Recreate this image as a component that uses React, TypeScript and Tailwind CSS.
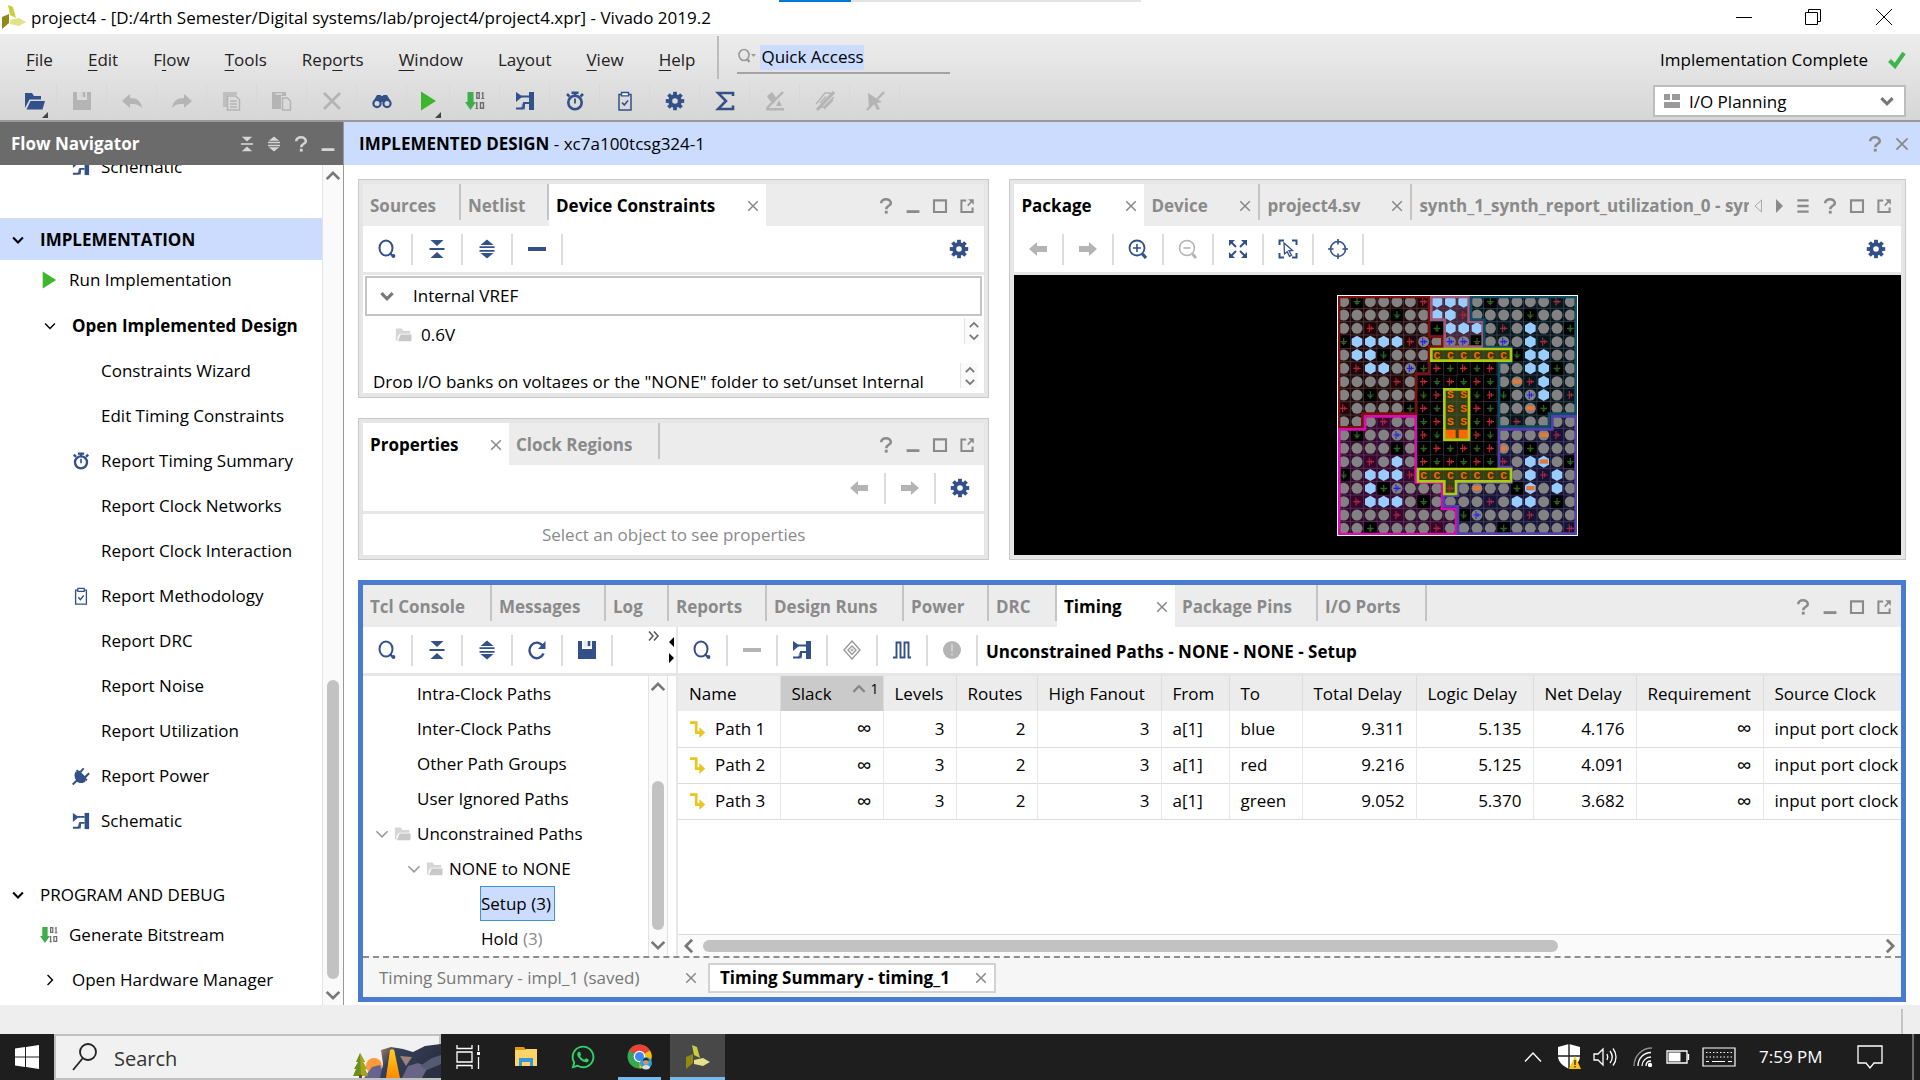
import React from "react";
import { FaWhatsapp } from "react-icons/fa";

type IconProps = { className?: string };

const BLUE = "text-[#335089]";
const GREY = "text-[#b4b4b4]";

function Svg({ size = 20, className = "", children }: { size?: number; className?: string; children: React.ReactNode }) {
  return (
    <svg width={size} height={size} viewBox="0 0 20 20" fill="none" stroke="currentColor" strokeWidth="2" className={`shrink-0 ${className}`} aria-hidden="true">
      {children}
    </svg>
  );
}

const Search = ({ className }: IconProps) => (
  <Svg className={className}>
    <ellipse cx="9" cy="9" rx="6.5" ry="7.500" />
    <path d="M13 14l2.5 3" />
    <circle cx="16.500" cy="17" r="1.900" fill="currentColor" stroke="none" />
  </Svg>
);
const Collapse = ({ className }: IconProps) => (
  <Svg className={className}>
    <path d="M3.5 1h13L10 7zM3.5 19h13L10 13z" fill="currentColor" stroke="none" />
    <path d="M2.500 10h15" />
  </Svg>
);
const Expand = ({ className }: IconProps) => (
  <Svg className={className}>
    <path d="M3.500 6h13L10 0.500zM3.500 14h13L10 19.500z" fill="currentColor" stroke="none" />
    <path d="M2.500 8.200h15M2.500 11.800h15" strokeWidth="1.800" />
  </Svg>
);
const Minus = ({ className }: IconProps) => (
  <Svg className={className}>
    <path d="M1 10h18" strokeWidth="4" />
  </Svg>
);
const Gear = ({ className }: IconProps) => (
  <Svg className={className}>
    <circle cx="10" cy="10" r="4.800" strokeWidth="4" />
    {[0, 45, 90, 135, 180, 225, 270, 315].map((a) => (
      <rect key={a} x="8.100" y="0.800" width="3.800" height="3.400" fill="currentColor" stroke="none" transform={`rotate(${a} 10 10)`} />
    ))}
  </Svg>
);
const ArrowL = ({ className }: IconProps) => (
  <Svg className={className}>
    <path d="M1 10l8-7v4h10v6H9v4z" fill="currentColor" stroke="none" />
  </Svg>
);
const ArrowR = ({ className }: IconProps) => (
  <Svg className={className}>
    <path d="M19 10l-8-7v4H1v6h10v4z" fill="currentColor" stroke="none" />
  </Svg>
);
const ZoomIn = ({ className }: IconProps) => (
  <Svg className={className}>
    <circle cx="9" cy="9" r="7.500" strokeWidth="1.800" />
    <path d="M14.500 15l3.500 4" strokeWidth="3.200" />
    <path d="M9 5v8M5 9h8" strokeWidth="1.600" />
  </Svg>
);
const ZoomOut = ({ className }: IconProps) => (
  <Svg className={className}>
    <circle cx="9" cy="9" r="7.500" strokeWidth="1.600" />
    <path d="M14.500 15l3.500 4" strokeWidth="2.800" />
    <path d="M5.500 9h7" strokeWidth="1.600" />
  </Svg>
);
const Fit = ({ className }: IconProps) => (
  <Svg className={className}>
    <path d="M1 1h6L1 7zM19 1h-6l6 6zM1 19h6l-6-6zM19 19h-6l6-6z" fill="currentColor" stroke="none" />
    <path d="M3 3l5 5M17 3l-5 5M3 17l5-5M17 17l-5-5" />
  </Svg>
);
const SelectArea = ({ className }: IconProps) => (
  <Svg className={className}>
    <path d="M6 1.500H1.500V6M14 1.500h4.500V6M6 18.500H1.500V14M14 18.500h4.500V14" />
    <path d="M6 4l8.500 7.500-3.500.3 2.500 4.500-2 1-2.300-4.600L6.500 15z" strokeWidth="1.300" />
  </Svg>
);
const Target = ({ className }: IconProps) => (
  <Svg className={className}>
    <circle cx="10" cy="10" r="7.500" strokeWidth="1.600" />
    <path d="M10 0v5.500M10 14.500V20M0 10h5.500M14.500 10H20" strokeWidth="1.600" />
  </Svg>
);
const Refresh = ({ className }: IconProps) => (
  <Svg className={className}>
    <path d="M15.500 5.500A7.300 7.800 0 1 0 16.500 13.500" strokeWidth="2.400" />
    <path d="M18.500 1v8h-7.500z" fill="currentColor" stroke="none" />
  </Svg>
);
const Save = ({ className }: IconProps) => (
  <Svg className={className}>
    <path d="M1 1h4v8h10V1h4v18H1z" fill="currentColor" stroke="none" />
    <path d="M6.500 1h7v6.500h-7z" fill="currentColor" stroke="none" opacity="0.120" />
    <path d="M12 1v5" strokeWidth="2.500" />
  </Svg>
);
const Undo = ({ className }: IconProps) => (
  <Svg className={className}>
    <path d="M0 10l8-7v4c7 0 11 3 12 10-3-3.500-6-4.500-12-4v4z" fill="currentColor" stroke="none" />
  </Svg>
);
const Redo = ({ className }: IconProps) => (
  <Svg className={className}>
    <path d="M20 10l-8-7v4C5 7 1 10 0 17c3-3.500 6-4.500 12-4v4z" fill="currentColor" stroke="none" />
  </Svg>
);
const Copy = ({ className }: IconProps) => (
  <Svg className={className}>
    <path d="M1 1h14v3H5v12H1z" fill="currentColor" stroke="none" opacity="0.700" />
    <path d="M5.500 5h8l4 3.500v10.500h-12zM8 10h7M8 13h7M8 16h7" strokeWidth="1.500" />
  </Svg>
);
const Paste = ({ className }: IconProps) => (
  <Svg className={className}>
    <path d="M0 1h14v4H9v13H0z" fill="currentColor" stroke="none" />
    <path d="M3.500 3h7" stroke="#dedede" strokeWidth="1.500" />
    <path d="M10.500 7h5l3 3v9h-8z" strokeWidth="1.500" />
  </Svg>
);
const Cross = ({ className }: IconProps) => (
  <Svg className={className}>
    <path d="M2 2l16 16M18 2L2 18" strokeWidth="2.800" />
  </Svg>
);
const Binoculars = ({ className }: IconProps) => (
  <Svg className={className}>
    <circle cx="5" cy="12.500" r="3.600" strokeWidth="2.200" />
    <circle cx="15" cy="12.500" r="3.600" strokeWidth="2.200" />
    <path d="M1.500 10L5 4h3.500l1 1h1l1-1H15l3.500 6-3.500-.5-3.500 1.500h-3L5 9.500z" fill="currentColor" stroke="none" />
  </Svg>
);
const Play = ({ className }: IconProps) => (
  <Svg className={className}>
    <path d="M3 0.500l15 9.500-15 9.500z" fill="#3db52c" stroke="none" />
  </Svg>
);
const Bits = ({ className }: IconProps) => (
  <Svg className={className}>
    <path d="M2.500 1h6v10H11l-5.500 8L0 11h2.500z" fill="#3fae49" stroke="none" />
    <path d="M11.800 1.800h2.400v5.400h-2.400zM17.800 1v7M11.800 11v7M15.500 11.800h3v5.400h-3z" stroke="#6e6e6e" strokeWidth="1.400" />
    <path d="M16.500 2.500h1M16.300 7.500h3M10.800 12.500h1M10.500 17.500h2.800" stroke="#6e6e6e" strokeWidth="1" />
  </Svg>
);
const Schematic = ({ className }: IconProps) => (
  <Svg className={className}>
    <path d="M1 1l6.500 4.500L1 11z" fill="currentColor" stroke="none" />
    <path d="M14 1h5v18h-5z" fill="currentColor" stroke="none" />
    <path d="M6 5.500h8M14 12H9v2.500a3 3 0 0 1-3 3H1" strokeWidth="2" />
    <path d="M7 12.500h3v6H6z" fill="currentColor" stroke="none" opacity="0.600" />
  </Svg>
);
const Stopwatch = ({ className }: IconProps) => (
  <Svg className={className}>
    <circle cx="10" cy="11.500" r="6.700" strokeWidth="2.600" />
    <path d="M6.500 1.800h7M10 1.800V5M2 3l2.500 2.500M18 3l-2.500 2.500" strokeWidth="2.600" />
    <path d="M10 7.500v5" strokeWidth="1.800" />
  </Svg>
);
const Clipboard = ({ className }: IconProps) => (
  <Svg className={className}>
    <path d="M4 3.500h12v15.500H4z" strokeWidth="1.500" />
    <path d="M6.500 1.500h7v3.400h-7z" fill="#fff" strokeWidth="1.400" />
    <path d="M7 11.500l2.300 2.500 3.700-4.500" strokeWidth="1.600" />
  </Svg>
);
const Sigma = ({ className }: IconProps) => (
  <Svg className={className}>
    <path d="M18 5V2H3l8 8-8 8h15v-3.500" strokeWidth="2.600" />
  </Svg>
);
const NoPin = ({ className }: IconProps) => (
  <Svg className={className}>
    <path d="M2 5l5-4 5 7-4 5-5-6zM11 15h6l-3-6zM1 17h18v2.500H1z" fill="currentColor" stroke="none" />
    <path d="M18 1L2 17" strokeWidth="2.400" />
  </Svg>
);
const NoEdit = ({ className }: IconProps) => (
  <Svg className={className}>
    <path d="M1 13L10 2h5v4M5 16h4L19 6M5 12l6-6.500M9 18l9-9" strokeWidth="1.400" />
    <path d="M19 1L2 19" strokeWidth="3" />
  </Svg>
);
const NoSelect = ({ className }: IconProps) => (
  <Svg className={className}>
    <path d="M3 2l14 9-5 1 3 6-3 1-3-6-5 4z" fill="currentColor" stroke="none" />
    <path d="M19 1L2 19" strokeWidth="2.400" />
  </Svg>
);
const FolderOpen = ({ className }: IconProps) => (
  <Svg className={className}>
    <path d="M0 17V2h7l2 3h7v3.500H4.500z" fill="currentColor" stroke="none" />
    <path d="M5.500 10H20l-2.500 8.500H1.500z" fill="currentColor" stroke="none" />
  </Svg>
);
const Folder = ({ className }: IconProps) => (
  <Svg size={17} className={`text-[#c8c8c8] ${className ?? ""}`}>
    <path d="M1 17V3h7l2 3h8v3H6L3 13v4z" fill="currentColor" stroke="none" opacity="0.750" />
    <path d="M6.500 10H19.500v6.500l-1 1.500H3.500z" fill="currentColor" stroke="none" />
  </Svg>
);
const Plug = ({ className }: IconProps) => (
  <Svg className={className}>
    <path d="M4 5l11 11c-3.500 2.500-7.500 2-9.500 0S1.500 9 4 5z" fill="currentColor" stroke="none" />
    <path d="M5 3.500L16.500 15M8.500 6.500L13 1.500M14 12l5-5M6 14.500L0.800 19.500" strokeWidth="2.200" />
    <path d="M5 5l3-1 8 8-2 4-6 1-4-5z" fill="currentColor" stroke="none" />
  </Svg>
);
const Diamond = ({ className }: IconProps) => (
  <Svg className={className}>
    <path d="M10 1l8 9-8 9-8-9zM10 6l4 4-4 4.500L6 10z" strokeWidth="1.400" />
    <circle cx="10" cy="10" r="1" strokeWidth="1" />
  </Svg>
);
const Wave = ({ className }: IconProps) => (
  <Svg className={className}>
    <path d="M1 17.500h3.500V2.500h4v15h4V2.500h4v15h2.500" strokeWidth="1.900" />
  </Svg>
);
const Alert = ({ className }: IconProps) => (
  <Svg className={className}>
    <circle cx="10" cy="10" r="9" fill="currentColor" stroke="none" />
    <path d="M10 4v7.500M10 13.500v2" stroke="#d2d2d2" strokeWidth="1.800" />
  </Svg>
);
const PathIcon = ({ className }: IconProps) => (
  <Svg size={18} className={`text-[#e8c61f] ${className ?? ""}`}>
    <path d="M1 3h7v11h5" strokeWidth="3" />
    <path d="M11.500 8l6.500 6-6.500 6z" fill="currentColor" stroke="none" />
  </Svg>
);
const Help = ({ className }: IconProps) => (
  <Svg size={16} className={className}>
    <path d="M4 6.500C4 0 16 0 16 6.500 16 10 10.300 9.500 10.300 14" strokeWidth="3.200" />
    <path d="M8.500 16h3.600v3.500H8.500z" fill="currentColor" stroke="none" />
  </Svg>
);
const Minimize = ({ className }: IconProps) => (
  <Svg size={16} className={className}>
    <path d="M2 17h16" strokeWidth="3.500" />
  </Svg>
);
const Maximize = ({ className }: IconProps) => (
  <Svg size={16} className={className}>
    <path d="M2.500 3h15v14.500h-15z" strokeWidth="2.600" />
  </Svg>
);
const Popout = ({ className }: IconProps) => (
  <Svg size={16} className={className}>
    <path d="M9 3H3v14.500h14V12" strokeWidth="2.500" />
    <path d="M18.500 1.500v7l-7-7z" fill="currentColor" stroke="none" />
    <path d="M16 4l-5 5.500" />
  </Svg>
);
const CloseX = ({ className }: IconProps) => (
  <Svg size={12} className={`text-[#8a8a8a] ${className ?? ""}`}>
    <path d="M2 2l16 16M18 2L2 18" strokeWidth="2.600" />
  </Svg>
);

const chevrons = {
  down: "M3 6.500l7 7 7-7",
  up: "M3 13.500l7-7 7 7",
  left: "M13.500 3l-7 7 7 7",
  right: "M6.500 3l7 7-7 7",
};
function Chevron({ dir, size = 16, weight = 3, className }: { dir: keyof typeof chevrons; size?: number; weight?: number; className?: string }) {
  return (
    <Svg size={size} className={className}>
      <path d={chevrons[dir]} strokeWidth={weight} />
    </Svg>
  );
}

const VivadoLogo = ({ size = 24 }: { size?: number }) => (
  <svg width={size} height={size} viewBox="0 0 24 24" aria-hidden="true" className="shrink-0">
    <path d="M6 0l5 2 3 11-6-3z" fill="#c9ce3d" />
    <path d="M0 12l7-3v9l-7 6z" fill="#8d8a16" />
    <path d="M8 15l9-2 7 4-7 4-9-2z" fill="#e3e18a" />
  </svg>
);

const menus: [string, string, string][] = [
  ["", "F", "ile"], ["", "E", "dit"], ["F", "l", "ow"], ["", "T", "ools"], ["Rep", "o", "rts"],
  ["", "W", "indow"], ["La", "y", "out"], ["", "V", "iew"], ["", "H", "elp"],
];

const mainTools: { name: string; icon: React.FC<IconProps>; tone: string; menu?: boolean }[] = [
  { name: "Open", icon: FolderOpen, tone: BLUE, menu: true },
  { name: "Save", icon: Save, tone: GREY },
  { name: "Undo", icon: Undo, tone: GREY },
  { name: "Redo", icon: Redo, tone: GREY },
  { name: "Copy", icon: Copy, tone: GREY },
  { name: "Paste", icon: Paste, tone: GREY },
  { name: "Delete", icon: Cross, tone: GREY },
  { name: "Find", icon: Binoculars, tone: BLUE },
  { name: "Run", icon: Play, tone: BLUE, menu: true },
  { name: "Bitstream", icon: Bits, tone: BLUE },
  { name: "Schematic", icon: Schematic, tone: BLUE },
  { name: "Timing", icon: Stopwatch, tone: BLUE },
  { name: "Methodology", icon: Clipboard, tone: BLUE },
  { name: "Settings", icon: Gear, tone: BLUE },
  { name: "Sum", icon: Sigma, tone: BLUE },
  { name: "Unplace", icon: NoPin, tone: GREY },
  { name: "Unroute", icon: NoEdit, tone: GREY },
  { name: "Unselect", icon: NoSelect, tone: GREY },
];

function TitleBar() {
  return (
    <header className="flex h-[34px] shrink-0 items-center bg-white pl-[2px]">
      <VivadoLogo />
      <h1 className="ml-[5px] pt-px text-[17px]">project4 - [D:/4rth Semester/Digital systems/lab/project4/project4.xpr] - Vivado 2019.2</h1>
      <div className="ml-auto flex">
        <button aria-label="Minimize" className="flex h-[34px] w-[69px] items-center justify-center">
          <svg width="16" height="16" stroke="#000"><path d="M0 8.500h16" /></svg>
        </button>
        <button aria-label="Restore" className="flex h-[34px] w-[69px] items-center justify-center">
          <svg width="16" height="16" fill="none" stroke="#000"><path d="M.5 3.500h12v12H.5zM3.500 3.500v-3h12v12h-3" /></svg>
        </button>
        <button aria-label="Close" className="flex h-[34px] w-[73px] items-center justify-center">
          <svg width="16" height="16" stroke="#000"><path d="M0 0l16 16M16 0L0 16" /></svg>
        </button>
      </div>
    </header>
  );
}

function MenuArea() {
  return (
    <div className="flex h-[88px] shrink-0 justify-between border-b-2 border-[#999] bg-linear-to-b from-[#ededed] to-[#d6d6d6]">
      <div>
        <div className="flex h-[46px] items-start">
          <nav className="flex h-[46px] items-center gap-[35px] pt-[6px] pl-[26px] text-[17px] text-[#222]">
            {menus.map(([a, b, c]) => (
              <button key={a + b + c}>{a}<span className="underline underline-offset-4">{b}</span>{c}</button>
            ))}
          </nav>
          <div className="mt-[2px] ml-[22px] h-[43px] w-[2px] bg-[#bcbcbc]" />
          <label className="mt-[8px] ml-[18px] flex h-[32px] w-[213px] items-center gap-[3px] border-b-2 border-[#a3a3a3]">
            <Svg size={20} className="text-[#999]">
              <ellipse cx="7" cy="8" rx="5" ry="5.500" strokeWidth="1.600" />
              <path d="M10 12l2.500 3" strokeWidth="2.400" />
              <path d="M14 7h5l-2.500 3z" fill="currentColor" stroke="none" />
            </Svg>
            <input aria-label="Quick Access" defaultValue="Quick Access" className="h-[25px] w-[104px] bg-[#cbdcfe] pl-px text-[17px] outline-none" />
          </label>
        </div>
        <div className="flex h-[40px] items-center pt-[2px] pl-[14px]">
          {mainTools.map(({ name, icon: Icon, tone, menu }) => (
            <button key={name} aria-label={name} className={`relative box-content flex h-[34px] items-center justify-center border-r border-[#d8d8d8] ${menu ? "w-[42px]" : "w-[49px]"}`}>
              <Icon className={tone} />
              {menu && (
                <svg width="6" height="6" className="absolute right-[8px] bottom-0"><path d="M6 0v6H0z" fill="#444" /></svg>
              )}
            </button>
          ))}
        </div>
      </div>
      <div className="flex flex-col items-end pr-[14px]">
        <div className="flex h-[51px] items-center gap-[20px] text-[17px]">
          <span>Implementation Complete</span>
          <svg width="18" height="18" viewBox="0 0 18 18" fill="none" stroke="#3db54a" strokeWidth="4" aria-hidden="true"><path d="M1.500 9.500L7 15 16 2" /></svg>
        </div>
        <div className="relative h-[32px] w-[253px] border-2 border-[#bdbdbd] bg-white">
          <svg width="16" height="14" className="absolute top-[7px] left-[9px]" fill="#9a9a9a" aria-hidden="true"><path d="M0 0h6v6H0zM8 0h8v6H8zM0 8h16v6H0z" /></svg>
          <select aria-label="Layout" className="size-full appearance-none bg-transparent pt-[2px] pl-[34px] text-[17px]">
            <option>I/O Planning</option>
          </select>
          <Chevron dir="down" weight={4} className="pointer-events-none absolute top-[6px] right-[9px] text-[#777]" />
        </div>
      </div>
    </div>
  );
}

const navItems: { label: string; icon?: React.FC<IconProps> }[] = [
  { label: "Constraints Wizard" },
  { label: "Edit Timing Constraints" },
  { label: "Report Timing Summary", icon: Stopwatch },
  { label: "Report Clock Networks" },
  { label: "Report Clock Interaction" },
  { label: "Report Methodology", icon: Clipboard },
  { label: "Report DRC" },
  { label: "Report Noise" },
  { label: "Report Utilization" },
  { label: "Report Power", icon: Plug },
  { label: "Schematic", icon: Schematic },
];

function NavItem({ label, icon: Icon }: { label: string; icon?: React.FC<IconProps> }) {
  return (
    <button className="flex h-[45px] w-full shrink-0 items-center pl-[72px]">
      <span className="w-[29px]">{Icon && <Icon className={`size-[18px] ${BLUE}`} />}</span>
      {label}
    </button>
  );
}

function FlowNavigator() {
  return (
    <aside className="flex w-[344px] shrink-0 flex-col border-r border-[#999] text-[17px]">
      <div className="flex h-[43px] shrink-0 items-center bg-[#6b6b6b] pr-[7px] pl-[11px] text-white">
        <h2 className="font-bold">Flow Navigator</h2>
        <div className="ml-auto flex gap-[11px] text-[#d6d6d6]">
          <button aria-label="Collapse all"><Collapse className="size-[16px]" /></button>
          <button aria-label="Expand all"><Expand className="size-[16px]" /></button>
          <button aria-label="Help"><Help /></button>
          <button aria-label="Minimize panel"><Minimize /></button>
        </div>
      </div>
      <div className="flex min-h-0 flex-1">
        <div className="flex min-w-0 flex-1 flex-col justify-end overflow-hidden pb-[2px]">
          <NavItem label="Schematic" icon={Schematic} />
          <button className="mt-[29px] flex h-[42px] shrink-0 items-center bg-[#cbdcfe] pt-[2px] pl-[11px] text-left font-bold">
            <Chevron dir="down" size={14} className="mr-[15px]" />IMPLEMENTATION
          </button>
          <button className="flex h-[43px] shrink-0 items-center pb-[3px] pl-[40px]">
            <Play className="mr-[11px] size-[18px]" />Run Implementation
          </button>
          <button className="flex h-[45px] shrink-0 items-center pl-[43px] font-bold">
            <Chevron dir="down" size={14} weight={2} className="mr-[15px]" />Open Implemented Design
          </button>
          {navItems.map((n) => <NavItem key={n.label} {...n} />)}
          <button className="mt-[30px] flex h-[42px] shrink-0 items-center pt-[2px] pl-[11px]">
            <Chevron dir="down" size={14} className="mr-[15px]" />PROGRAM AND DEBUG
          </button>
          <button className="flex h-[43px] shrink-0 items-center pb-[3px] pl-[40px]">
            <Bits className="mr-[11px] size-[18px]" />Generate Bitstream
          </button>
          <button className="flex h-[45px] shrink-0 items-center pb-[2px] pl-[43px]">
            <Chevron dir="right" size={14} weight={2} className="mr-[15px]" />Open Hardware Manager
          </button>
        </div>
        <div className="flex w-[21px] flex-col items-center border-l border-[#e3e3e3] bg-[#fafafa] pt-[2px] pb-px text-[#777]">
          <Chevron dir="up" size={18} />
          <div className="flex-[495]" />
          <div className="w-[12px] flex-[299] rounded-full bg-[#c2c2c2]" />
          <Chevron dir="down" size={18} className="mt-[7px]" />
        </div>
      </div>
    </aside>
  );
}

type TabDef = { label: string; width: string; active?: boolean; close?: boolean };

function TabBar({ tabs, scroll, minimize = true }: { tabs: TabDef[]; scroll?: boolean; minimize?: boolean }) {
  return (
    <div className="flex h-[42px] shrink-0 bg-[#ececec] text-[17px]">
      <div role="tablist" className="flex min-w-0 flex-1 overflow-hidden">
        {tabs.map((t, i) => {
          const line = !t.active && !(tabs[i + 1] === undefined && scroll);
          return (
            <div key={t.label} className={`flex shrink-0 ${t.width} ${t.active ? "bg-white" : ""}`}>
              <div className="flex h-full min-w-0 flex-1 items-center justify-between px-[7px] pt-px">
                <button role="tab" aria-selected={!!t.active} className={`whitespace-nowrap font-bold ${t.active ? "text-black" : "text-[#8a8a8a]"}`}>{t.label}</button>
                {t.close && <button aria-label={`Close ${t.label}`}><CloseX /></button>}
              </div>
              {line && <div className="h-[36px] w-[2px] bg-[#c4c4c4]" />}
            </div>
          );
        })}
      </div>
      <div className="flex items-center gap-[11px] pt-[2px] pr-[9px] pl-[4px] text-[#8a8a8a]">
        {scroll && (
          <>
            <button aria-label="Scroll tabs left"><svg width="10" height="16" fill="none" stroke="#aaa"><path d="M8.500 2v12L2 8z" /></svg></button>
            <button aria-label="Scroll tabs right"><svg width="10" height="16" fill="#8a8a8a"><path d="M2 1v14l7-7z" /></svg></button>
            <button aria-label="Tab list"><Svg size={16}><path d="M3 3h14M3 10h14M3 17h14" strokeWidth="3" /></Svg></button>
          </>
        )}
        <button aria-label="Help"><Help /></button>
        {minimize && <button aria-label="Minimize panel"><Minimize /></button>}
        <button aria-label="Maximize panel"><Maximize /></button>
        <button aria-label="Float panel"><Popout /></button>
      </div>
    </div>
  );
}

function Tool({ icon: Icon, name, tone = BLUE, line = "right" }: { icon: React.FC<IconProps>; name: string; tone?: string; line?: "left" | "right" | "none" }) {
  const border = line === "right" ? "border-r-2" : line === "left" ? "border-l-2" : "";
  return (
    <button aria-label={name} className={`flex h-[31px] w-[50px] shrink-0 items-center justify-center border-[#dcdcdc] ${border}`}>
      <Icon className={tone} />
    </button>
  );
}

const barClass = "flex h-[49px] shrink-0 items-center border-b-[3px] border-[#e6e6e6] bg-white";
const panelClass = "flex min-h-0 min-w-0 flex-col border border-[#c9c9c9] bg-[#e6e6e6] p-[4px]";

function Spinner() {
  return (
    <div className="flex w-[18px] flex-col items-center justify-center border-l border-[#e3e3e3] bg-[#fafafa] text-[#777]">
      <Chevron dir="up" size={12} />
      <Chevron dir="down" size={12} />
    </div>
  );
}

function ConstraintsPanel() {
  return (
    <section className={panelClass}>
      <TabBar tabs={[
        { label: "Sources", width: "w-[98px]" },
        { label: "Netlist", width: "w-[88px]" },
        { label: "Device Constraints", width: "w-[217px]", active: true, close: true },
      ]} />
      <div className={barClass}>
        <Tool icon={Search} name="Search" />
        <Tool icon={Collapse} name="Collapse all" />
        <Tool icon={Expand} name="Expand all" />
        <Tool icon={Minus} name="Remove" />
        <div className="ml-auto"><Tool icon={Gear} name="Settings" line="none" /></div>
      </div>
      <div className="flex min-h-0 flex-1 flex-col bg-white px-[2px] pt-px pb-[5px] text-[17px]">
        <button className="flex h-[40px] shrink-0 items-center border-2 border-[#c4c4c4] pl-[12px]">
          <Chevron dir="down" weight={4} className="mr-[18px] text-[#777]" />Internal VREF
        </button>
        <div className="mt-[2px] flex h-[26px] shrink-0 justify-between">
          <div className="flex items-center gap-[9px] pt-[7px] pl-[30px]"><Folder />0.6V</div>
          <Spinner />
        </div>
        <div className="mt-auto flex h-[25px] shrink-0 justify-between overflow-hidden pr-[4px] pl-[8px]">
          <p className="whitespace-nowrap pt-[6px]">Drop I/O banks on voltages or the "NONE" folder to set/unset Internal</p>
          <Spinner />
        </div>
      </div>
    </section>
  );
}

function PropertiesPanel() {
  return (
    <section className={panelClass}>
      <TabBar tabs={[
        { label: "Properties", width: "w-[146px]", active: true, close: true },
        { label: "Clock Regions", width: "w-[151px]" },
      ]} />
      <div className={`${barClass} justify-end`}>
        <Tool icon={ArrowL} name="Back" tone={GREY} line="none" />
        <Tool icon={ArrowR} name="Forward" tone={GREY} line="left" />
        <Tool icon={Gear} name="Settings" line="left" />
      </div>
      <div className="flex flex-1 items-center justify-center bg-white text-[17px] text-[#8a8a8a]">Select an object to see properties</div>
    </section>
  );
}

const grid = [
  "ogoooorhhhogooooro",
  "oooogoohhroooogooo",
  "oorooooghhhorohoog",
  "ghhhhrbobbgobohroo",
  "ohhgoooCCCCCCghhoo",
  "orhhobgrgrgroohhgo",
  "oooororgrgrgofrhoo",
  "oogooogrSSgrgobhor",
  "roooogrgSSrgoofgoo",
  "oooroogrSSgroroooo",
  "ogooborgOOrgooofro",
  "oooogogrgrgrxogooo",
  "oorohorgrgrgrohFog",
  "gohhhrCCCCCCCohrho",
  "oohgbooorofoogFoho",
  "orhhhogoooorohhogo",
  "ooooroooogbooorooo",
  "oogooooroooogoooor",
];

const cellText = "font-['Liberation_Mono'] text-[34px] font-bold";

function Cell({ kind, x, y, core }: { kind: string; x: number; y: number; core: boolean }) {
  const dot = <circle cx={x} cy={y} r="16.500" fill="#828282" />;
  const hex = <path d={`M${x} ${y - 18}l16 9v18l-16 9-16-9v-18z`} fill="#99ccff" />;
  const cross = (c: string) => <path d={`M${x - 11} ${y}h22M${x - 3} ${y - 12}v24M${x + 3} ${y - 6}v12`} stroke={c} strokeWidth="3.500" />;
  const chip = <rect x={x - 12} y={y - 7} width="25" height="13" fill="#e07a34" />;
  switch (kind) {
    case "o": return dot;
    case "h": return hex;
    case "b": return <>{dot}{cross("#2424f0")}</>;
    case "f": return <>{dot}{chip}</>;
    case "F": return <>{hex}{chip}</>;
    case "x": return <>{dot}{cross("#e07a34")}<rect x={x - 12} y={y - 8} width="22" height="15" fill="#e07a34" opacity="0.700" /></>;
    case "r": return cross(core ? "#c02832" : "#a62a3a");
    case "g": return (
      <>
        <rect x={x - 19} y={y - 19} width="38" height="38" fill="#000" />
        <path d={`M${x} ${y - 11}v22M${x - 10} ${y}h20M${x - 6} ${y + 5}h12`} stroke="#2f6420" strokeWidth="3.500" />
      </>
    );
    case "C": return <text x={x} y={y + 11} textAnchor="middle" fill="#ff6600" className={cellText}>C</text>;
    case "S": return <text x={x} y={y + 10} textAnchor="middle" fill="#ff6600" className={cellText}>S</text>;
    case "O": return <rect x={x - 15} y={y - 16} width="31" height="26" fill="#ff6600" />;
    default: return null;
  }
}

const banks = [
  { pts: "60,36 330,36 330,155 370,155 370,185 330,185 330,266 291,266 291,386 130,386 130,427 60,427", fill: "#220606", stroke: "#7d0f0f" },
  { pts: "337,36 449,36 449,110 491,110 491,185 377,185 377,104 337,104", fill: "#4a2438", stroke: "#9c5a7e" },
  { pts: "456,36 770,36 770,386 690,386 690,425 540,425 540,232 577,232 577,186 496,186 496,104 456,104", fill: "#04161c", stroke: "#114c66" },
  { pts: "61,433 138,433 138,394 290,394 290,592 369,592 369,672 411,672 411,747 61,747", fill: "#3a0430", stroke: "#d80fae" },
  { pts: "770,394 700,394 700,433 540,433 540,546 577,546 577,592 417,592 417,632 375,632 375,664 417,664 417,746 770,746", fill: "#17123a", stroke: "#5340ac" },
];
const special = [
  "337,192 576,192 576,227 337,227",
  "376,313 450,313 450,464 376,464",
  "297,552 576,552 576,589 411,589 411,627 376,627 376,589 297,589",
];

function PackageView() {
  const lines = Array.from({ length: 17 }, (_, i) => i);
  return (
    <svg viewBox="54 30 723 723" className="aspect-square w-[241px]" role="img" aria-label="Package pin map">
      <rect x="54" y="30" width="723" height="723" fill="#000" />
      {banks.map((b) => <polygon key={b.stroke} points={b.pts} fill={b.fill} />)}
      {special.map((p) => <polygon key={p} points={p} fill="#33400f" />)}
      <g stroke="#4c4c58" strokeWidth="2">
        {lines.map((i) => <path key={i} d={`M${94 + 40 * i} 34V750M58 ${70 + 40 * i}H774`} />)}
      </g>
      {grid.map((row, j) => row.split("").map((k, i) => (
        <Cell key={`${i}-${j}`} kind={k} x={74 + 40 * i} y={50 + 40 * j} core={i > 5 && i < 12 && j > 4 && j < 13} />
      )))}
      {banks.map((b) => <polygon key={b.stroke} points={b.pts} fill="none" stroke={b.stroke} strokeWidth="8" />)}
      {special.map((p) => <polygon key={p} points={p} fill="none" stroke="#adcc10" strokeWidth="8" />)}
      <rect x="55.500" y="31.500" width="720" height="720" fill="none" stroke="#fff" strokeWidth="3" />
    </svg>
  );
}

function PackagePanel() {
  return (
    <section className={panelClass}>
      <TabBar scroll minimize={false} tabs={[
        { label: "Package", width: "w-[130px]", active: true, close: true },
        { label: "Device", width: "w-[116px]", close: true },
        { label: "project4.sv", width: "w-[152px]", close: true },
        { label: "synth_1_synth_report_utilization_0 - synth_1", width: "w-[420px]" },
      ]} />
      <div className={barClass}>
        <Tool icon={ArrowL} name="Back" tone={GREY} />
        <Tool icon={ArrowR} name="Forward" tone={GREY} />
        <Tool icon={ZoomIn} name="Zoom in" />
        <Tool icon={ZoomOut} name="Zoom out" tone={GREY} />
        <Tool icon={Fit} name="Zoom fit" />
        <Tool icon={SelectArea} name="Select area" />
        <Tool icon={Target} name="Autofit selection" />
        <div className="ml-auto"><Tool icon={Gear} name="Settings" line="none" /></div>
      </div>
      <div className="flex min-h-0 flex-1 items-center justify-center bg-black">
        <PackageView />
      </div>
    </section>
  );
}

const timingTabs: TabDef[] = [
  { label: "Tcl Console", width: "w-[129px]" },
  { label: "Messages", width: "w-[114px]" },
  { label: "Log", width: "w-[63px]" },
  { label: "Reports", width: "w-[98px]" },
  { label: "Design Runs", width: "w-[137px]" },
  { label: "Power", width: "w-[85px]" },
  { label: "DRC", width: "w-[68px]" },
  { label: "Timing", width: "w-[118px]", active: true, close: true },
  { label: "Package Pins", width: "w-[143px]" },
  { label: "I/O Ports", width: "w-[109px]" },
];

function TreeRow({ pad, open, children }: { pad: string; open?: boolean; children: React.ReactNode }) {
  return (
    <li className={`flex h-[35px] items-center ${pad}`}>
      {open && <><Chevron dir="down" weight={2} className="mr-[4px] text-[#999]" /><Folder className="mr-[6px]" /></>}
      {children}
    </li>
  );
}

const columns: { label: string; width: string; right?: boolean }[] = [
  { label: "Name", width: "w-[102px]" },
  { label: "Slack", width: "w-[103px]", right: true },
  { label: "Levels", width: "w-[73px]", right: true },
  { label: "Routes", width: "w-[81px]", right: true },
  { label: "High Fanout", width: "w-[124px]", right: true },
  { label: "From", width: "w-[68px]" },
  { label: "To", width: "w-[73px]" },
  { label: "Total Delay", width: "w-[114px]", right: true },
  { label: "Logic Delay", width: "w-[117px]", right: true },
  { label: "Net Delay", width: "w-[103px]", right: true },
  { label: "Requirement", width: "w-[127px]", right: true },
  { label: "Source Clock", width: "w-[160px]" },
];
const paths = [
  ["Path 1", "∞", "3", "2", "3", "a[1]", "blue", "9.311", "5.135", "4.176", "∞", "input port clock"],
  ["Path 2", "∞", "3", "2", "3", "a[1]", "red", "9.216", "5.125", "4.091", "∞", "input port clock"],
  ["Path 3", "∞", "3", "2", "3", "a[1]", "green", "9.052", "5.370", "3.682", "∞", "input port clock"],
];

function PathTable() {
  return (
    <table className="w-[1245px] table-fixed border-collapse text-left">
      <thead>
        <tr className="h-[35px] bg-[#ececec]">
          {columns.map((c) => (
            <th key={c.label} scope="col" className={`${c.width} whitespace-nowrap border-r border-[#dcdcdc] pt-px pr-0 pl-[11px] font-normal ${c.label === "Slack" ? "bg-[#cacaca]" : ""}`}>
              {c.label === "Slack" ? (
                <span className="flex justify-between pr-[4px]">Slack
                  <span className="flex items-start text-[14px] leading-[16px] text-black"><Chevron dir="up" className="mr-[3px] text-[#888]" />1</span>
                </span>
              ) : c.label}
            </th>
          ))}
        </tr>
      </thead>
      <tbody>
        {paths.map((row) => (
          <tr key={row[0]} className="h-[36px] border-b border-[#dcdcdc]">
            {row.map((v, i) => (
              <td key={columns[i].label} className={`overflow-hidden whitespace-nowrap border-r border-[#e6e6e6] ${columns[i].right ? "pr-[11px] text-right" : "pl-[11px]"} ${v === "∞" ? "text-[21px] leading-none" : ""}`}>
                {i === 0 ? <span className="flex items-center gap-[8px]"><PathIcon />{v}</span> : v}
              </td>
            ))}
          </tr>
        ))}
      </tbody>
    </table>
  );
}

function TimingPanel() {
  return (
    <section className="col-span-2 flex min-h-0 min-w-0 flex-col border-[5px] border-[#4a7bd0] bg-white text-[17px]">
      <TabBar tabs={timingTabs} />
      <div className="flex min-h-0 flex-1">
        <div className="flex w-[313px] shrink-0 flex-col">
          <div className={barClass}>
            <Tool icon={Search} name="Search" />
            <Tool icon={Collapse} name="Collapse all" />
            <Tool icon={Expand} name="Expand all" />
            <Tool icon={Refresh} name="Refresh" />
            <Tool icon={Save} name="Save" />
            <button aria-label="More tools" className="mb-[28px] ml-auto text-[#555]">
              <svg width="12" height="12" viewBox="0 0 12 12" fill="none" stroke="currentColor" strokeWidth="1.500"><path d="M1 1.500L5 6l-4 4.500M6 1.500L10 6l-4 4.500" /></svg>
            </button>
            <svg width="6" height="28" className="mr-[2px] ml-[8px]" aria-hidden="true"><path d="M6 1v10L1 6zM1 17v10l5-5z" fill="#000" /></svg>
          </div>
          <div className="flex min-h-0 flex-1">
            <ul className="min-w-0 flex-1 overflow-hidden">
              <TreeRow pad="pl-[54px]">Intra-Clock Paths</TreeRow>
              <TreeRow pad="pl-[54px]">Inter-Clock Paths</TreeRow>
              <TreeRow pad="pl-[54px]">Other Path Groups</TreeRow>
              <TreeRow pad="pl-[54px]">User Ignored Paths</TreeRow>
              <TreeRow pad="pl-[11px]" open>Unconstrained Paths</TreeRow>
              <TreeRow pad="pl-[43px]" open>NONE to NONE</TreeRow>
              <TreeRow pad="pl-[117px]"><span className="flex h-[35px] items-center border border-[#3f94d8] bg-[#cbdcfe] pr-[3px]">Setup (3)</span></TreeRow>
              <TreeRow pad="pl-[118px]">Hold&nbsp;<span className="text-[#8a8a8a]">(3)</span></TreeRow>
            </ul>
            <div className="mr-[8px] flex w-[20px] flex-col items-center border-x border-[#e3e3e3] bg-[#fafafa] pt-[2px] pb-[2px] text-[#777]">
              <Chevron dir="up" size={18} />
              <div className="flex-[85]" />
              <div className="w-[12px] flex-[148] rounded-full bg-[#c2c2c2]" />
              <Chevron dir="down" size={18} className="mt-[6px]" />
            </div>
          </div>
        </div>
        <div className="flex min-w-0 flex-1 flex-col border-l-2 border-[#e6e6e6]">
          <div className={barClass}>
            <Tool icon={Search} name="Search paths" />
            <Tool icon={Minus} name="Remove path" tone={GREY} />
            <Tool icon={Schematic} name="Path schematic" />
            <Tool icon={Diamond} name="Highlight" tone="text-[#9a9a9a]" />
            <Tool icon={Wave} name="Waveform" />
            <Tool icon={Alert} name="Warnings" tone={GREY} />
            <h3 className="ml-[8px] pt-[4px] font-bold">Unconstrained Paths - NONE - NONE - Setup</h3>
          </div>
          <div className="min-h-0 flex-1 overflow-hidden"><PathTable /></div>
          <div className="flex h-[22px] shrink-0 items-center border-t border-[#dcdcdc] bg-[#fafafa] px-[2px] text-[#777]">
            <Chevron dir="left" size={18} />
            <div className="ml-[5px] h-[12px] flex-[854] rounded-full bg-[#c2c2c2]" />
            <div className="flex-[323]" />
            <Chevron dir="right" size={18} />
          </div>
        </div>
      </div>
      <div className="flex h-[41px] shrink-0 items-center border-t-2 border-dashed border-[#8e8e8e] bg-[#f6f6f6] pt-px">
        <div className="flex w-[345px] items-center justify-between pr-[11px] pl-[16px] text-[#777]">
          <button>Timing Summary - impl_1 (saved)</button>
          <button aria-label="Close impl_1"><CloseX /></button>
        </div>
        <div className="flex h-[30px] w-[288px] items-center justify-between border-2 border-[#d2d2d2] bg-white pr-[7px] pl-[10px] font-bold">
          <button>Timing Summary - timing_1</button>
          <button aria-label="Close timing_1"><CloseX /></button>
        </div>
      </div>
    </section>
  );
}

function SearchArt() {
  return (
    <svg width="89" height="34" viewBox="0 0 89 34" aria-hidden="true">
      <defs>
        <linearGradient id="rock" x1="0" x2="1" y2="0.400"><stop offset="0" stopColor="#b98a5e" /><stop offset="0.300" stopColor="#35405c" /><stop offset="1" stopColor="#2b3040" /></linearGradient>
        <linearGradient id="lava" x2="0" y2="1"><stop offset="0" stopColor="#ffcf1f" /><stop offset="1" stopColor="#ff8a00" /></linearGradient>
      </defs>
      <circle cx="22" cy="22" r="8" fill="#ff9a3c" />
      <path d="M12 34l8-11 8-2 6 13z" fill="#66648c" />
      <path d="M28 34l3-14-2-14 10-3 12 2 10 3 12-6 16-2v34z" fill="url(#rock)" />
      <path d="M38 6c3-2 5 0 5 4l5 24H34z" fill="url(#lava)" />
      <path d="M50 34l6-12 10-3 10 4-6 11z" fill="#686587" />
      <path d="M48 12l12 1-6 9z" fill="#9c8478" />
      <path d="M68 22l12-8 9-3v9l-14 6z" fill="#555a73" />
      <path d="M8 9l5 9h-2l4 7h-2l3 7H1l3-7H2l4-7H4z" fill="#6f8d1e" />
      <path d="M8 9l5 9h-2l4 7h-2l3 7H9z" fill="#a3a51f" />
      <path d="M7 31h3v3H7z" fill="#704c12" />
    </svg>
  );
}

const slot = "flex h-full w-[57px] shrink-0 items-center justify-center";

function Taskbar() {
  return (
    <footer className="flex h-[46px] shrink-0 bg-[#1e1e1e] text-white">
      <button aria-label="Start" className="flex w-[54px] items-center justify-center">
        <svg width="24" height="24" fill="#fff"><path d="M0 3.500l10-1.500v9.500H0zM11 1.900L24 0v11.500H11zM0 12.500h10V22L0 20.500zM11 12.500h13V24l-13-1.900z" /></svg>
      </button>
      <label className="flex w-[387px] items-center border-2 border-[#c0c0c0] bg-[#f1f1f1] pl-[16px]">
        <svg width="25" height="28" viewBox="0 0 25 28" fill="none" stroke="#222" strokeWidth="1.800"><circle cx="16" cy="9" r="8" /><path d="M10.500 15.500L1 27" /></svg>
        <input type="search" placeholder="Search" aria-label="Search" className="ml-[17px] min-w-0 flex-1 bg-transparent pt-[3px] text-[20px] text-[#222] outline-none placeholder:text-[#333]" />
        <span className="-mr-[2px] self-end"><SearchArt /></span>
      </label>
      <div className="flex pr-[2px]">
        <button aria-label="Task view" className="flex h-full w-[54px] items-center justify-center">
          <svg width="24" height="24" fill="none" stroke="#fff" strokeWidth="1.300"><path d="M1 7h15v10H1zM1 0v3.500h15V0M1 24v-3.500h15V24M22.500 0v6M22.500 12v12" /><path d="M21 7h3v3h-3z" fill="#fff" stroke="none" /></svg>
        </button>
      </div>
      <button aria-label="File Explorer" className={slot}>
        <svg width="24" height="20" viewBox="0 0 24 20"><path d="M1 0h9l2 3H1z" fill="#e09a10" /><path d="M1 3h10l1-1h11v17H1z" fill="#ffd467" /><path d="M5 19v-8h14v8h-3v-4H8v4z" fill="#3a96dd" /></svg>
      </button>
      <button aria-label="WhatsApp" className={slot}><FaWhatsapp size={26} color="#2bd468" /></button>
      <button aria-label="Chrome" className={`${slot} relative`}>
        <svg width="26" height="26" viewBox="0 0 26 26">
          <circle cx="12.500" cy="12.500" r="12" fill="#34a853" />
          <path d="M12.500 12.500L2.100 6.500A12 12 0 0 1 23 6.500z" fill="#ea4335" />
          <path d="M12.500 12.500L23 6.500A12 12 0 0 1 12.500 24.500z" fill="#fbbc05" />
          <circle cx="12.500" cy="12.500" r="5.800" fill="#fff" />
          <circle cx="12.500" cy="12.500" r="4.500" fill="#4285f4" />
          <circle cx="19" cy="19" r="6" fill="#2a9fd6" />
          <path d="M15 24c0-4 8-4 8 0a6 6 0 0 1-8 0z" fill="#ddd" /><circle cx="19" cy="18" r="2.800" fill="#c99478" /><path d="M16 17c0-4 6-4 6 0l-3-1z" fill="#222" />
        </svg>
        <span className="absolute bottom-0 h-[3px] w-[43px] bg-[#76b9ed]" />
      </button>
      <button aria-label="Vivado" className="relative ml-[2px] flex h-full w-[55px] items-center justify-center bg-[#484848]">
        <VivadoLogo />
        <span className="absolute bottom-0 h-[3px] w-full bg-[#76b9ed]" />
      </button>
      <div className="ml-auto flex items-center">
        <button aria-label="Hidden icons"><svg width="18" height="12" fill="none" stroke="#fff" strokeWidth="1.400"><path d="M1 10.500L9 2l8 8.500" /></svg></button>
        <svg width="24" height="26" viewBox="0 0 24 26" className="ml-[15px]" aria-label="Security"><path d="M12 0l11 3v9c0 6-5 10-11 13C6 22 1 18 1 12V3z" fill="#fff" /><path d="M12 0v25M1 12h22" stroke="#1e1e1e" strokeWidth="1.400" /><path d="M18 12l6 13H12z" fill="#ffc20e" /><path d="M18 16v5M18 22v1.500" stroke="#222" strokeWidth="1.300" /></svg>
        <svg width="24" height="20" viewBox="0 0 24 20" className="ml-[12px]" fill="none" stroke="#fff" strokeWidth="1.300" aria-label="Volume"><path d="M1 7h4l5-5v16l-5-5H1zM14 7c1 2 1 4 0 6M17 4c3 4 3 8 0 12M20 1.500c4 5 4 12 0 17" /></svg>
        <svg width="19" height="20" viewBox="0 0 19 20" className="ml-[16px]" fill="none" stroke="#fff" strokeWidth="1.300" aria-label="Wi-Fi"><path d="M1 19C1 9 9 1 19 1" opacity="0.500" /><path d="M5 19C5 11 11 5.500 18 5.500" /><path d="M9 19c0-5 4-9 9-9M13 19c0-3 2-5 5-5" /><circle cx="17" cy="18" r="1.500" fill="#fff" /></svg>
        <svg width="24" height="14" viewBox="0 0 24 14" className="ml-[14px]" aria-label="Battery"><path d="M1 1h20v12H1zM22.500 4v6" fill="none" stroke="#fff" strokeWidth="1.300" /><path d="M2.500 2.500h12v9h-12z" fill="#fff" /></svg>
        <svg width="34" height="20" viewBox="0 0 34 20" className="ml-[12px]" fill="none" stroke="#fff" strokeWidth="1.200" aria-label="Touch keyboard"><path d="M1 1h32v18H1z" /><path d="M4 5.500h26M4 10h26" strokeDasharray="1.500 2" /><path d="M4 14.500h3M10 14.500h13M26 14.500h4" /></svg>
        <time className="ml-[23px] w-[68px] whitespace-nowrap text-[17px]">7:59 PM</time>
        <button aria-label="Notifications" className="ml-[30px]"><svg width="26" height="26" viewBox="0 0 26 26" fill="none" stroke="#fff" strokeWidth="1.300"><path d="M1 2h24v17h-8l-4 5-4-5H1z" /></svg></button>
        <div className="mr-[6px] ml-[29px] h-[46px] w-[2px] bg-[#6b6b6b]" />
      </div>
    </footer>
  );
}

export default function App() {
  return (
    <div className="relative flex h-screen flex-col overflow-hidden bg-white font-['Open_Sans',sans-serif] leading-normal text-black">
      <div className="absolute top-0 left-[779px] flex h-[2px]">
        <div className="w-[72px] bg-[#0078d7]" />
        <div className="w-[290px] bg-[#e3e3e3]" />
      </div>
      <TitleBar />
      <MenuArea />
      <div className="flex min-h-0 flex-1">
        <FlowNavigator />
        <main className="flex min-w-0 flex-1 flex-col">
          <div className="flex h-[43px] shrink-0 items-center bg-[#cbdcfe] pr-[11px] pl-[15px] text-[17px]">
            <h2><span className="font-bold">IMPLEMENTED DESIGN</span> - xc7a100tcsg324-1</h2>
            <div className="ml-auto flex items-center gap-[12px] text-[#8a8a8a]">
              <button aria-label="Help"><Help /></button>
              <button aria-label="Close design"><CloseX className="size-[14px]" /></button>
            </div>
          </div>
          <div className="grid min-h-0 flex-1 grid-cols-[631fr_896fr] grid-rows-[381fr_422fr] gap-[20px] px-[14px] pt-[14px] pb-[3px]">
            <div className="grid min-h-0 min-w-0 grid-rows-[219fr_142fr] gap-[20px]">
              <ConstraintsPanel />
              <PropertiesPanel />
            </div>
            <PackagePanel />
            <TimingPanel />
          </div>
        </main>
      </div>
      <div className="flex h-[29px] shrink-0 justify-end bg-[#eee] pt-[4px] pr-[17px]">
        <div className="w-[2px] bg-[#c4c4c4]" />
      </div>
      <Taskbar />
    </div>
  );
}
